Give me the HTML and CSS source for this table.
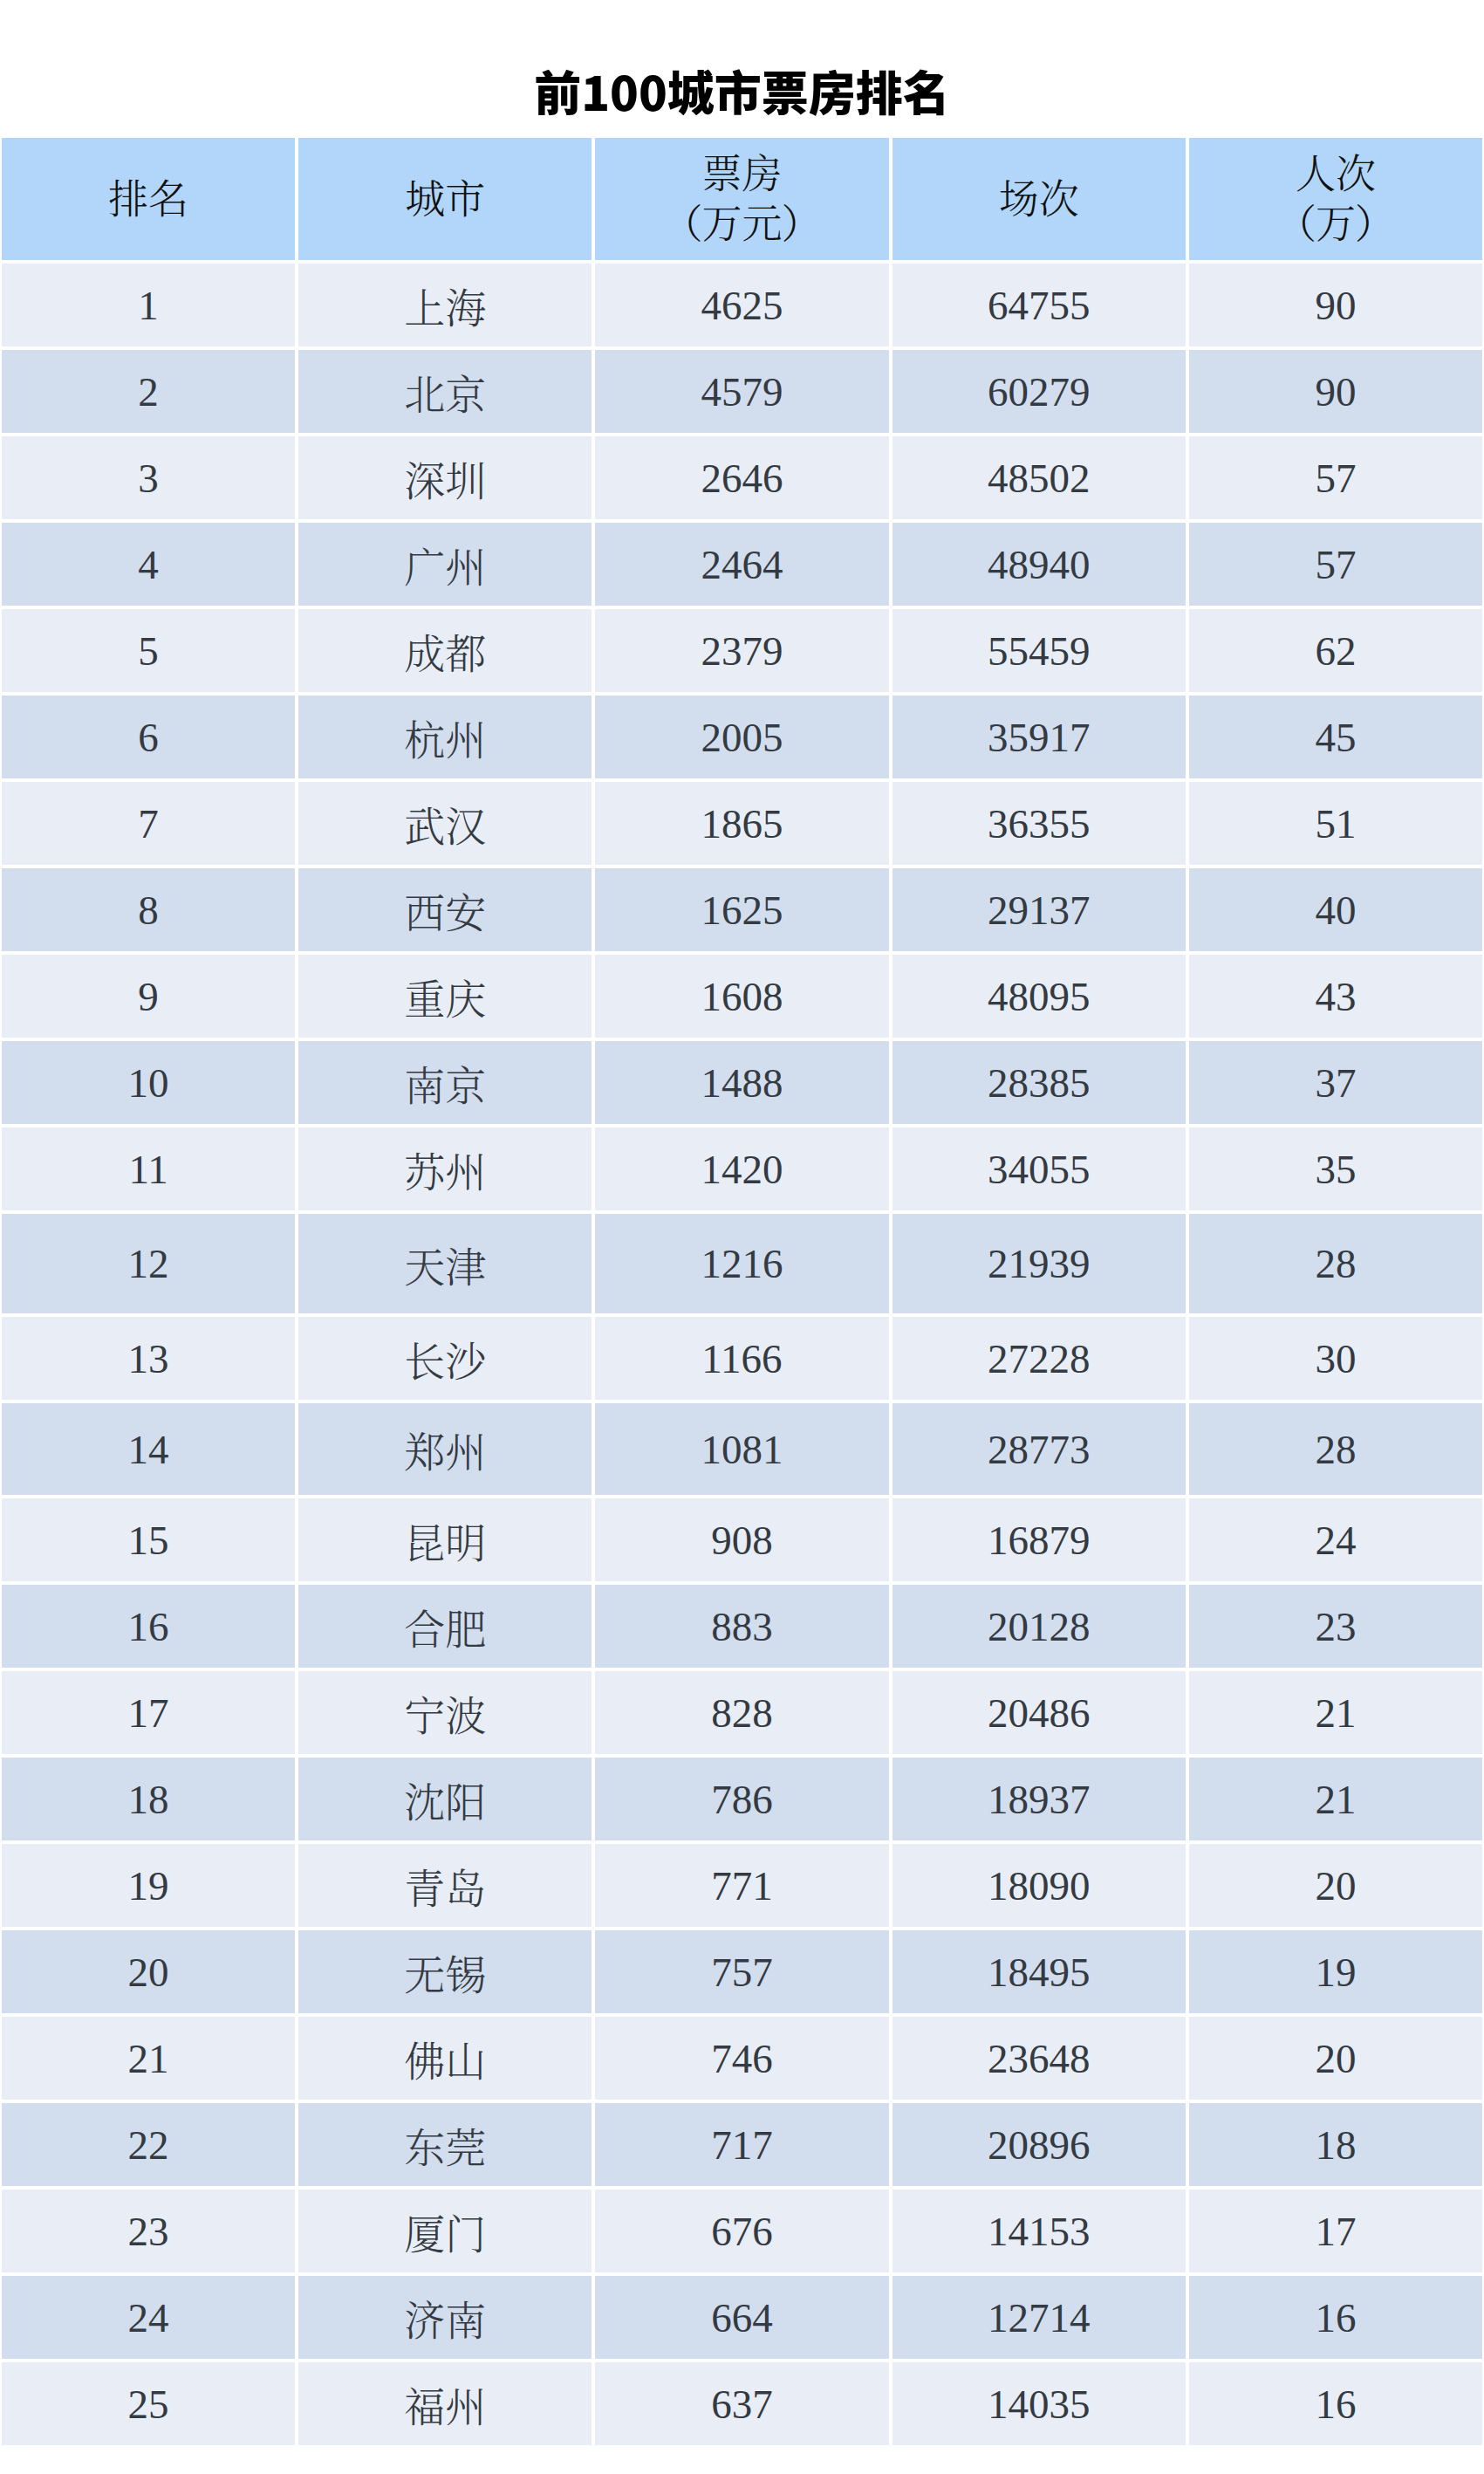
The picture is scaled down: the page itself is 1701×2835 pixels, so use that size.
FILE: index.html
```html
<!DOCTYPE html>
<html lang="zh-CN">
<head>
<meta charset="utf-8">
<title>前100城市票房排名</title>
<link rel="stylesheet" href="styles.css">
</head>
<body>
<div class="page">
  <h1 class="title">前100城市票房排名</h1>
  <div class="table">
    <div class="row head">
      <div class="cell">排名</div>
      <div class="cell">城市</div>
      <div class="cell two">票房<br>（万元）</div>
      <div class="cell">场次</div>
      <div class="cell two">人次<br>（万）</div>
    </div>
    <div class="row odd"><div class="cell">1</div><div class="cell">上海</div><div class="cell">4625</div><div class="cell">64755</div><div class="cell">90</div></div>
    <div class="row even"><div class="cell">2</div><div class="cell">北京</div><div class="cell">4579</div><div class="cell">60279</div><div class="cell">90</div></div>
    <div class="row odd"><div class="cell">3</div><div class="cell">深圳</div><div class="cell">2646</div><div class="cell">48502</div><div class="cell">57</div></div>
    <div class="row even"><div class="cell">4</div><div class="cell">广州</div><div class="cell">2464</div><div class="cell">48940</div><div class="cell">57</div></div>
    <div class="row odd"><div class="cell">5</div><div class="cell">成都</div><div class="cell">2379</div><div class="cell">55459</div><div class="cell">62</div></div>
    <div class="row even"><div class="cell">6</div><div class="cell">杭州</div><div class="cell">2005</div><div class="cell">35917</div><div class="cell">45</div></div>
    <div class="row odd"><div class="cell">7</div><div class="cell">武汉</div><div class="cell">1865</div><div class="cell">36355</div><div class="cell">51</div></div>
    <div class="row even"><div class="cell">8</div><div class="cell">西安</div><div class="cell">1625</div><div class="cell">29137</div><div class="cell">40</div></div>
    <div class="row odd"><div class="cell">9</div><div class="cell">重庆</div><div class="cell">1608</div><div class="cell">48095</div><div class="cell">43</div></div>
    <div class="row even"><div class="cell">10</div><div class="cell">南京</div><div class="cell">1488</div><div class="cell">28385</div><div class="cell">37</div></div>
    <div class="row odd"><div class="cell">11</div><div class="cell">苏州</div><div class="cell">1420</div><div class="cell">34055</div><div class="cell">35</div></div>
    <div class="row even tall-a"><div class="cell">12</div><div class="cell">天津</div><div class="cell">1216</div><div class="cell">21939</div><div class="cell">28</div></div>
    <div class="row odd"><div class="cell">13</div><div class="cell">长沙</div><div class="cell">1166</div><div class="cell">27228</div><div class="cell">30</div></div>
    <div class="row even tall-b"><div class="cell">14</div><div class="cell">郑州</div><div class="cell">1081</div><div class="cell">28773</div><div class="cell">28</div></div>
    <div class="row odd"><div class="cell">15</div><div class="cell">昆明</div><div class="cell">908</div><div class="cell">16879</div><div class="cell">24</div></div>
    <div class="row even"><div class="cell">16</div><div class="cell">合肥</div><div class="cell">883</div><div class="cell">20128</div><div class="cell">23</div></div>
    <div class="row odd"><div class="cell">17</div><div class="cell">宁波</div><div class="cell">828</div><div class="cell">20486</div><div class="cell">21</div></div>
    <div class="row even"><div class="cell">18</div><div class="cell">沈阳</div><div class="cell">786</div><div class="cell">18937</div><div class="cell">21</div></div>
    <div class="row odd"><div class="cell">19</div><div class="cell">青岛</div><div class="cell">771</div><div class="cell">18090</div><div class="cell">20</div></div>
    <div class="row even"><div class="cell">20</div><div class="cell">无锡</div><div class="cell">757</div><div class="cell">18495</div><div class="cell">19</div></div>
    <div class="row odd"><div class="cell">21</div><div class="cell">佛山</div><div class="cell">746</div><div class="cell">23648</div><div class="cell">20</div></div>
    <div class="row even"><div class="cell">22</div><div class="cell">东莞</div><div class="cell">717</div><div class="cell">20896</div><div class="cell">18</div></div>
    <div class="row odd"><div class="cell">23</div><div class="cell">厦门</div><div class="cell">676</div><div class="cell">14153</div><div class="cell">17</div></div>
    <div class="row even"><div class="cell">24</div><div class="cell">济南</div><div class="cell">664</div><div class="cell">12714</div><div class="cell">16</div></div>
    <div class="row odd"><div class="cell">25</div><div class="cell">福州</div><div class="cell">637</div><div class="cell">14035</div><div class="cell">16</div></div>
  </div>
</div>
</body>
</html>
```
FILE: styles.css
```css
html, body {
  margin: 0;
  padding: 0;
  background: #ffffff;
}

.page {
  width: 1701px;
  min-height: 2835px;
  background: #ffffff;
}

.title {
  margin: 0;
  height: 158px;
  box-sizing: border-box;
  padding-top: 77px;
  font-family: "Noto Sans CJK SC", "Noto Sans", sans-serif;
  font-weight: 900;
  font-size: 54px;
  line-height: 54px;
  text-align: center;
  color: #000000;
}

.table {
  display: flex;
  flex-direction: column;
  gap: 4px;
  margin-left: 2px;
  width: 1697px;
}

.row {
  display: grid;
  grid-template-columns: repeat(5, 1fr);
  column-gap: 4px;
  height: 95px;
}

.row.head { height: 140px; }
.row.tall-a { height: 114px; }
.row.tall-b { height: 105px; }

.cell {
  display: flex;
  align-items: center;
  justify-content: center;
  text-align: center;
  font-family: "Liberation Serif", "Noto Serif CJK SC", "Source Han Serif SC", "AR PL UMing CN", "Noto Sans CJK SC", serif;
  font-size: 47px;
  font-weight: 300;
  color: #333a42;
}

.head .cell {
  background: #b2d6f9;
  color: #111111;
  font-size: 46px;
  line-height: 57px;
  font-feature-settings: "palt";
}

.odd .cell { background: #e8edf6; }
.even .cell { background: #d2ddee; }
```
